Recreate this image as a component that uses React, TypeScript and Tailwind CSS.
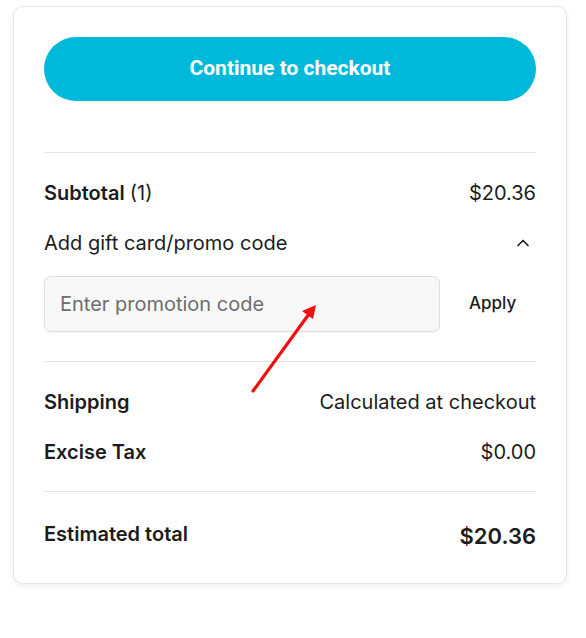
import { ChevronUp } from "lucide-react";

const INTER = "font-['Inter','Liberation_Sans',sans-serif]";

function Row({ label, value, bold = true }: { label: React.ReactNode; value: string; bold?: boolean }) {
  return (
    <div className="flex items-center justify-between h-7 text-[20px] text-[#1c1c1c]">
      <span className={bold ? "font-semibold" : ""}>{label}</span>
      <span>{value}</span>
    </div>
  );
}

export default function App() {
  return (
    <div className={`relative w-[586px] h-[638px] bg-white ${INTER}`}>
      <div className="absolute left-[13px] top-[6px] w-[554px] rounded-[10px] border border-[#e6e6e6] bg-white px-[30px] pt-[30px] pb-[33px] shadow-[0_2px_6px_rgba(0,0,0,0.08)]">
        <button className="w-full h-16 rounded-full bg-[#00b9da] text-white text-[21px] font-bold font-['Roboto','Liberation_Sans',sans-serif]">
          Continue to checkout
        </button>

        <div className="mt-[51px] border-t border-[#e5e5e5]" />

        <div className="mt-[26px]">
          <Row
            label={
              <>
                Subtotal <span className="font-normal">(1)</span>
              </>
            }
            value="$20.36"
          />
        </div>

        <div className="mt-[22px] flex items-center justify-between h-7 text-[20px] text-[#1c1c1c]">
          <span>Add gift card/promo code</span>
          <ChevronUp className="w-5 h-5 mr-[3px]" strokeWidth={2} />
        </div>

        <div className="mt-[19px] flex items-center">
          <input
            placeholder="Enter promotion code"
            className="w-[396px] h-[56px] rounded-[7px] border border-[#dedede] bg-[#f8f8f8] px-[15px] text-[20px] placeholder:text-[#6e6e6e] outline-none shadow-[0_1px_2px_rgba(0,0,0,0.05)]"
          />
          <button className="ml-[29px] text-[17px] font-medium text-[#1c1c1c]">Apply</button>
        </div>

        <div className="mt-[29px] border-t border-[#e5e5e5]" />

        <div className="mt-[26px] flex flex-col gap-[22px]">
          <Row label="Shipping" value="Calculated at checkout" />
          <Row label="Excise Tax" value="$0.00" />
        </div>

        <div className="mt-[25px] border-t border-[#e5e5e5]" />

        <div className="mt-[28px] flex items-end justify-between text-[#1c1c1c]">
          <span className="text-[20px] font-semibold leading-7 mb-[2px]">Estimated total</span>
          <span className="text-[22px] font-semibold leading-7">$20.36</span>
        </div>
      </div>

      <svg className="absolute left-0 top-0 pointer-events-none" width="586" height="638">
        <line x1="253" y1="391" x2="309" y2="314" stroke="#f00f0f" strokeWidth="3.2" strokeLinecap="round" />
        <polygon points="316,305 302,311 313,319" fill="#f00f0f" />
      </svg>
    </div>
  );
}
